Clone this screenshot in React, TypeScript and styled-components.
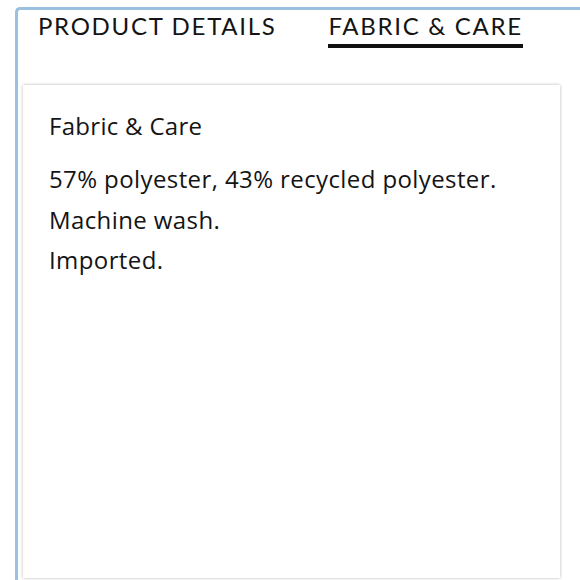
import React, { useState } from 'react'
import styled, { createGlobalStyle } from 'styled-components'

const GlobalStyle = createGlobalStyle`
  html, body {
    margin: 0;
    padding: 0;
    background: #ffffff;
    overflow: hidden;
  }
  body {
    font-family: Lato, 'Noto Sans', sans-serif;
    color: #141414;
  }
`

const Frame = styled.div`
  margin: 7px 0 0 15px;
  width: calc(100vw - 15px);
  height: calc(100vh - 7px);
  border: 3px solid #9cc0e0;
  border-right: none;
  border-bottom: none;
  border-radius: 5px 0 0 0;
  box-sizing: border-box;
  display: flex;
  flex-direction: column;
`

const TabBar = styled.div`
  display: flex;
  gap: 52px;
  padding: 0 0 0 20px;
  height: 75px;
`

const Tab = styled.button<{ active: boolean }>`
  background: none;
  border: none;
  padding: 2px 0 0;
  font-family: Lato, 'Noto Sans', sans-serif;
  font-size: 24px;
  letter-spacing: 1.7px;
  color: #141414;
  cursor: pointer;
  align-self: flex-start;
  line-height: 28px;
  border-bottom: 4px solid ${({ active }) => (active ? '#111' : 'transparent')};
  padding-bottom: 4px;
`

const Card = styled.div`
  margin: 0 0 2px 5px;
  width: 537px;
  flex: 1;
  background: #fff;
  box-shadow: 0 0 3px rgba(0, 0, 0, 0.3);
  padding: 25px 26px;
  box-sizing: border-box;
  font-family: 'Open Sans', Lato, sans-serif;
`

const CardTitle = styled.h3`
  margin: 0 0 17px;
  font-size: 24px;
  font-weight: 400;
  line-height: 32px;
  letter-spacing: 0.3px;
`

const Line = styled.p`
  margin: 0;
  font-size: 24px;
  line-height: 40.5px;
  letter-spacing: 0.4px;
`

const tabs = ['PRODUCT DETAILS', 'FABRIC & CARE']

export default function App() {
  const [active, setActive] = useState(1)
  return (
    <>
      <GlobalStyle />
      <Frame>
        <TabBar>
          {tabs.map((t, i) => (
            <Tab key={t} active={i === active} onClick={() => setActive(i)}>
              {t}
            </Tab>
          ))}
        </TabBar>
        <Card>
          <CardTitle>Fabric &amp; Care</CardTitle>
          <Line>57% polyester, 43% recycled polyester.</Line>
          <Line>Machine wash.</Line>
          <Line>Imported.</Line>
        </Card>
      </Frame>
    </>
  )
}
